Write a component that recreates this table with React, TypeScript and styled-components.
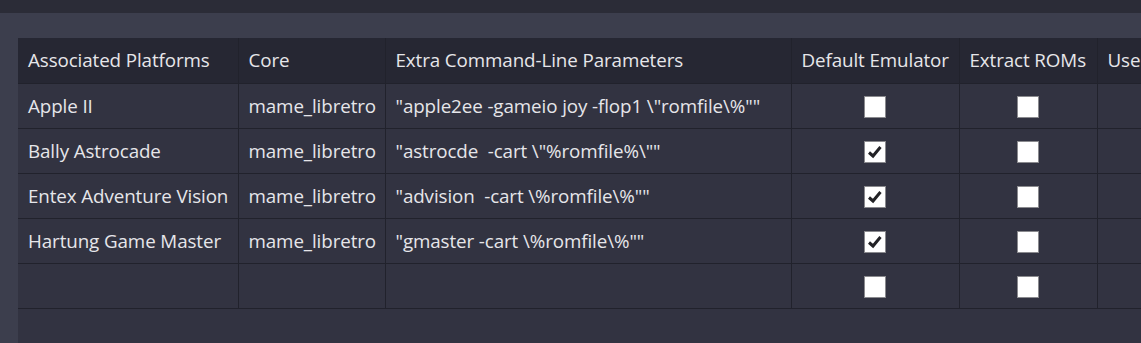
import React from "react";
import styled, { createGlobalStyle } from "styled-components";

const GlobalStyle = createGlobalStyle`
  html, body {
    margin: 0;
    padding: 0;
    background: #3c3e4d;
    overflow: hidden;
  }
  body {
    font-family: "Open Sans", "Noto Sans", sans-serif;
  }
`;

const Page = styled.div`
  width: 1141px;
  height: 343px;
  display: flex;
  flex-direction: column;
  background: #3c3e4d;
`;

const TopBar = styled.div`
  height: 13px;
  flex-shrink: 0;
  background: #2b2c37;
`;

const Body = styled.div`
  flex: 1;
  padding: 25px 0 0 18px;
  display: flex;
  min-height: 0;
`;

const Grid = styled.div`
  flex: 1;
  background: #323341;
  overflow: hidden;
`;

const Table = styled.table`
  border-collapse: collapse;
  table-layout: fixed;
  width: 1200px;
  font-size: 18.8px;
  letter-spacing: -0.1px;
  color: #e6e6ea;
`;

const HeadCell = styled.th<{ $w: number }>`
  width: ${(p) => p.$w}px;
  height: 45px;
  padding: 0 10px;
  text-align: left;
  font-weight: 400;
  background: #262733;
  border-right: 1px solid #21222c;
  border-bottom: 1px solid #21222c;
  white-space: nowrap;
  overflow: hidden;
  box-sizing: border-box;
`;

const Cell = styled.td<{ $center?: boolean; $pre?: boolean }>`
  height: 44px;
  padding: 0 10px;
  text-align: ${(p) => (p.$center ? "center" : "left")};
  border-right: 1px solid #21222c;
  border-bottom: 1px solid #21222c;
  white-space: ${(p) => (p.$pre ? "pre" : "nowrap")};
  overflow: hidden;
`;

const Box = styled.span`
  display: inline-flex;
  align-items: center;
  justify-content: center;
  width: 20px;
  height: 20px;
  background: #ffffff;
  border: 1px solid #8a8a8e;
  vertical-align: middle;
`;

const Check = ({ on }: { on: boolean }) => (
  <Box>
    {on && (
      <svg width="18" height="18" viewBox="0 0 18 18">
        <path
          d="M3 9.5 L7 13 L14.5 4"
          fill="none"
          stroke="#222226"
          strokeWidth="3"
          strokeLinecap="butt"
        />
      </svg>
    )}
  </Box>
);

const columns = [
  { title: "Associated Platforms", w: 220 },
  { title: "Core", w: 147 },
  { title: "Extra Command-Line Parameters", w: 406 },
  { title: "Default Emulator", w: 168 },
  { title: "Extract ROMs", w: 138 },
  { title: "Use", w: 121 },
];

const rows = [
  { platform: "Apple II", core: "mame_libretro", params: '"apple2ee -gameio joy -flop1 \\"romfile\\%""', def: false },
  { platform: "Bally Astrocade", core: "mame_libretro", params: '"astrocde  -cart \\"%romfile%\\""', def: true },
  { platform: "Entex Adventure Vision", core: "mame_libretro", params: '"advision  -cart \\%romfile\\%""', def: true },
  { platform: "Hartung Game Master", core: "mame_libretro", params: '"gmaster -cart \\%romfile\\%""', def: true },
  { platform: "", core: "", params: "", def: false },
];

export default function App() {
  return (
    <Page>
      <GlobalStyle />
      <TopBar />
      <Body>
        <Grid>
          <Table>
            <thead>
              <tr>
                {columns.map((c) => (
                  <HeadCell key={c.title} $w={c.w}>
                    {c.title}
                  </HeadCell>
                ))}
              </tr>
            </thead>
            <tbody>
              {rows.map((r, i) => (
                <tr key={i}>
                  <Cell>{r.platform}</Cell>
                  <Cell>{r.core}</Cell>
                  <Cell $pre>{r.params}</Cell>
                  <Cell $center>
                    <Check on={r.def} />
                  </Cell>
                  <Cell $center>
                    <Check on={false} />
                  </Cell>
                  <Cell />
                </tr>
              ))}
            </tbody>
          </Table>
        </Grid>
      </Body>
    </Page>
  );
}
